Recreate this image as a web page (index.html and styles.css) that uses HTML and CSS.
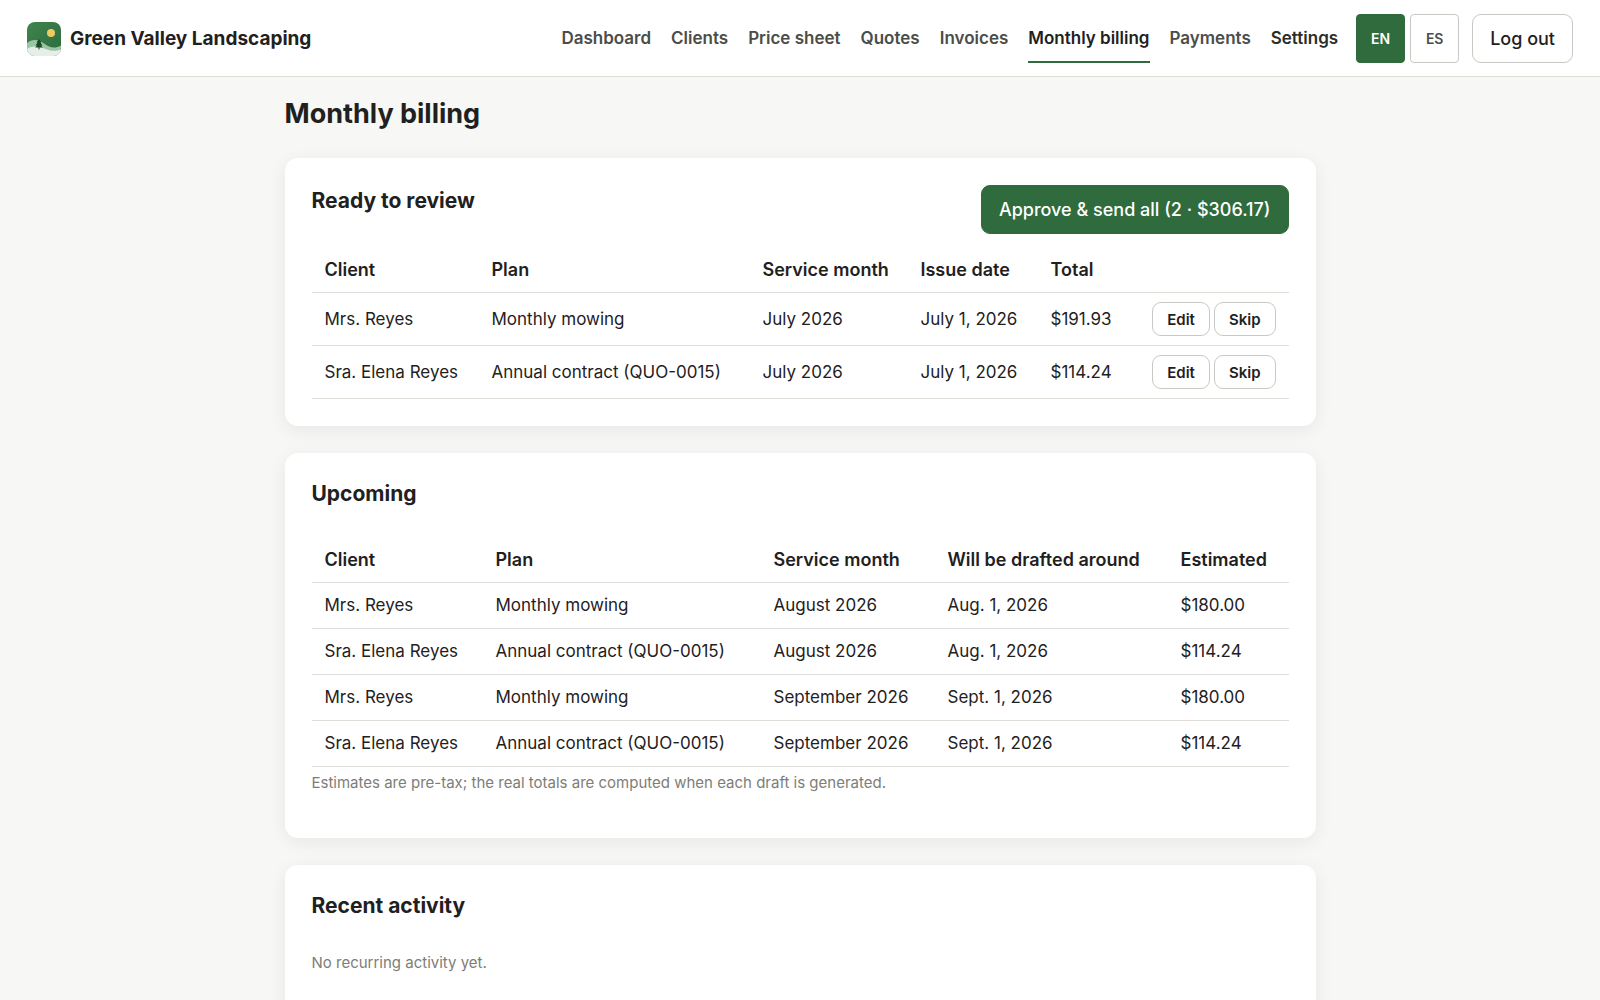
FILE: index.html
```html
<!DOCTYPE html>
<html lang="en">
  <head>
    <meta charset="UTF-8" />
    <meta name="viewport" content="width=device-width, initial-scale=1.0" />
    <title>Monthly billing - Green Valley Landscaping</title>

    <link rel="stylesheet" href="styles.css">
  </head>
  <body>
    <header class="topbar">
      <a class="brand" href="#">
        <svg class="logo" viewBox="0 0 34 34" aria-hidden="true">
          <defs>
            <linearGradient id="sky" x1="0" y1="0" x2="1" y2="1">
              <stop offset="0" stop-color="#3f854e" />
              <stop offset="1" stop-color="#2c6b3c" />
            </linearGradient>
            <clipPath id="tile"><rect width="34" height="34" rx="8" /></clipPath>
          </defs>
          <g clip-path="url(#tile)">
            <rect width="34" height="34" fill="url(#sky)" />
            <circle cx="24" cy="11" r="4" fill="#eecb62" />
            <path d="M0 21C5 17 11 17 17 21.500C23 26 28 27 34 23.500V34H0Z" fill="#9cc5a4" />
            <path d="M0 27C7 22.500 14 25 20 27.500C25 29.500 30 29 34 27.500V34H0Z" fill="#e6efe7" />
            <path d="M12 17L14.500 20.500H13.500L15.500 23.500H14L15.800 25.500H12.500V27.500H11.500V25.500H8.200L10 23.500H8.500L10.500 20.500H9.500Z" fill="#1d4a2b" />
          </g>
        </svg>
        Green Valley Landscaping
      </a>
      <nav class="nav">
        <a href="#">Dashboard</a>
        <a href="#">Clients</a>
        <a href="#">Price sheet</a>
        <a href="#">Quotes</a>
        <a href="#">Invoices</a>
        <a href="#" class="active" aria-current="page">Monthly billing</a>
        <a href="#">Payments</a>
        <a href="#" class="dark">Settings</a>
      </nav>
      <div class="lang">
        <button type="button" class="on">EN</button>
        <button type="button">ES</button>
      </div>
      <button type="button" class="button">Log out</button>
    </header>

    <main class="container">
      <h1>Monthly billing</h1>

      <section class="card">
        <div class="card-head">
          <h2>Ready to review</h2>
          <button type="button" class="button primary">Approve &amp; send all (2 · $306.17)</button>
        </div>
        <table class="review">
          <thead>
            <tr>
              <th>Client</th>
              <th>Plan</th>
              <th>Service month</th>
              <th>Issue date</th>
              <th>Total</th>
              <th></th>
            </tr>
          </thead>
          <tbody>
            <tr>
              <td>Mrs. Reyes</td>
              <td>Monthly mowing</td>
              <td>July 2026</td>
              <td>July 1, 2026</td>
              <td>$191.93</td>
              <td>
                <div class="actions">
                  <button type="button" class="button small">Edit</button>
                  <button type="button" class="button small">Skip</button>
                </div>
              </td>
            </tr>
            <tr>
              <td>Sra. Elena Reyes</td>
              <td>Annual contract (QUO-0015)</td>
              <td>July 2026</td>
              <td>July 1, 2026</td>
              <td>$114.24</td>
              <td>
                <div class="actions">
                  <button type="button" class="button small">Edit</button>
                  <button type="button" class="button small">Skip</button>
                </div>
              </td>
            </tr>
          </tbody>
        </table>
      </section>

      <section class="card">
        <h2>Upcoming</h2>
        <table class="upcoming">
          <thead>
            <tr>
              <th>Client</th>
              <th>Plan</th>
              <th>Service month</th>
              <th>Will be drafted around</th>
              <th>Estimated</th>
            </tr>
          </thead>
          <tbody>
            <tr>
              <td>Mrs. Reyes</td>
              <td>Monthly mowing</td>
              <td>August 2026</td>
              <td>Aug. 1, 2026</td>
              <td>$180.00</td>
            </tr>
            <tr>
              <td>Sra. Elena Reyes</td>
              <td>Annual contract (QUO-0015)</td>
              <td>August 2026</td>
              <td>Aug. 1, 2026</td>
              <td>$114.24</td>
            </tr>
            <tr>
              <td>Mrs. Reyes</td>
              <td>Monthly mowing</td>
              <td>September 2026</td>
              <td>Sept. 1, 2026</td>
              <td>$180.00</td>
            </tr>
            <tr>
              <td>Sra. Elena Reyes</td>
              <td>Annual contract (QUO-0015)</td>
              <td>September 2026</td>
              <td>Sept. 1, 2026</td>
              <td>$114.24</td>
            </tr>
          </tbody>
        </table>
        <p class="muted">Estimates are pre-tax; the real totals are computed when each draft is generated.</p>
      </section>

      <section class="card">
        <h2>Recent activity</h2>
        <p class="muted">No recurring activity yet.</p>
      </section>
    </main>
  </body>
</html>
```
FILE: styles.css
```css
* {
  box-sizing: border-box;
}
body {
  margin: 0;
  background-color: #f7f7f5;
  color: #1f211e;
  font-family: Inter, "Liberation Sans", sans-serif;
  font-size: 17px;
  line-height: 27px;
}
a {
  color: inherit;
  text-decoration: none;
}

/* top bar */
.topbar {
  display: flex;
  align-items: center;
  padding: 14px 27px 13px;
  background-color: #fff;
  border-bottom: 1px solid #deded9;
}
.brand {
  display: flex;
  align-items: center;
  gap: 9px;
  margin-right: auto;
  font-size: 19px;
  font-weight: 700;
}
.logo {
  width: 34px;
  height: 34px;
}
.nav {
  display: flex;
  gap: 20px;
  margin-right: 18px;
}
.nav a {
  padding: 10px 0 9px;
  border-bottom: 2px solid transparent;
  color: #4b4d49;
  font-weight: 600;
}
.nav .dark {
  color: #2b2d2a;
}
.nav .active {
  color: #1f211e;
  border-bottom-color: #2f6b3d;
}
.lang {
  display: flex;
  gap: 5px;
  margin-right: 13px;
}
.lang button {
  width: 49px;
  height: 49px;
  padding: 0;
  border: 1px solid #c9c9c3;
  border-radius: 4px;
  background-color: #fff;
  color: #4b4d49;
  font-family: inherit;
  font-size: 14px;
  font-weight: 600;
}
.lang .on {
  background-color: #2f6b3d;
  border-color: #2f6b3d;
  color: #fff;
}

.button {
  height: 49px;
  padding: 0 17px;
  border: 1px solid #c9c9c3;
  border-radius: 9px;
  background-color: #fff;
  color: #1f211e;
  font-family: inherit;
  font-size: 18px;
  font-weight: 500;
  cursor: pointer;
}
.primary {
  background-color: #2f6b3d;
  border-color: #2f6b3d;
  color: #fff;
}
.small {
  height: 34px;
  padding: 0 14px;
  font-size: 15px;
  font-weight: 600;
}

/* page */
.container {
  max-width: 1085px;
  margin: 0 auto;
  padding: 18px 27px;
}
h1 {
  margin: 0 0 25px;
  font-size: 27px;
  font-weight: 700;
  line-height: 38px;
}
h2 {
  margin: 0 0 29px;
  font-size: 21px;
  font-weight: 700;
  line-height: 28px;
}
.card {
  margin-bottom: 27px;
  padding: 27px;
  background-color: #fff;
  border-radius: 13px;
  box-shadow: 0 4px 18px rgba(31, 33, 30, 0.07);
}
.card-head {
  display: flex;
  justify-content: space-between;
  align-items: flex-start;
  margin-bottom: 13px;
}
.card-head h2 {
  margin: 2px 0 0;
}

table {
  width: 100%;
  table-layout: fixed;
  border-collapse: collapse;
}
th,
td {
  padding: 9px 13px;
  border-bottom: 1px solid #deded9;
  text-align: left;
  white-space: nowrap;
}
th {
  font-size: 18px;
  font-weight: 600;
}
.review th:nth-child(1) { width: 167px; }
.review th:nth-child(2) { width: 271px; }
.review th:nth-child(3) { width: 158px; }
.review th:nth-child(4) { width: 130px; }
.review th:nth-child(5) { width: 100px; }
.upcoming th:nth-child(1) { width: 171px; }
.upcoming th:nth-child(2) { width: 278px; }
.upcoming th:nth-child(3) { width: 174px; }
.upcoming th:nth-child(4) { width: 233px; }
.actions {
  display: flex;
  justify-content: flex-end;
  gap: 4px;
}
.muted {
  margin: 2px 0 15px;
  color: #7c7e77;
  font-size: 15px;
}
```
